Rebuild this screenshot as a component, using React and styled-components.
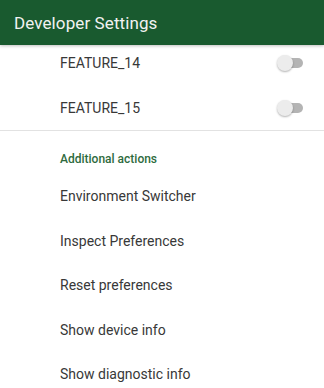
import React from "react";
import styled, { createGlobalStyle } from "styled-components";

const Global = createGlobalStyle`
  html, body { margin: 0; padding: 0; background: #fff; }
  body { font-family: Roboto, "Noto Sans", Arial, sans-serif; }
`;

const Screen = styled.div`
  width: 324px;
  height: 388px;
  overflow: hidden;
  display: flex;
  flex-direction: column;
  background: #fff;
`;

const AppBar = styled.header`
  position: relative;
  z-index: 1;
  flex: 0 0 45px;
  display: flex;
  align-items: center;
  padding: 0 14px;
  background: #195a2f;
  box-shadow: 0 1px 3px rgba(0, 0, 0, 0.25);
`;

const Title = styled.h1`
  margin: 0;
  font-size: 17px;
  font-weight: 400;
  color: #f2f2f2;
  letter-spacing: 0.1px;
`;

const Body = styled.div`
  flex: 1;
  overflow: hidden;
`;

const List = styled.div`
  margin-top: -5px;
  display: flex;
  flex-direction: column;
`;

const Row = styled.div`
  height: 45px;
  display: flex;
  align-items: center;
  justify-content: space-between;
  padding: 0 20px 0 60px;
  font-size: 14px;
  color: #383838;
`;

const Divider = styled.div`
  height: 1px;
  background: #e2e2e2;
`;

const Category = styled.div`
  height: 43px;
  display: flex;
  align-items: center;
  padding: 12px 0 0 60px;
  box-sizing: border-box;
  font-size: 12px;
  font-weight: 500;
  color: #2e6b3d;
`;

const Action = styled.div`
  height: 44.5px;
  display: flex;
  align-items: center;
  padding-left: 60px;
  font-size: 14px;
  color: #383838;
`;

const Switch = styled.div`
  position: relative;
  width: 27px;
  height: 16px;
  display: flex;
  align-items: center;
`;

const Track = styled.div`
  margin-left: 8px;
  width: 18px;
  height: 10px;
  border-radius: 5px;
  background: #b4b4b4;
`;

const Thumb = styled.div`
  position: absolute;
  left: 0;
  top: 0;
  width: 16px;
  height: 16px;
  border-radius: 50%;
  background: #ececec;
  box-shadow: 0 1px 2px rgba(0, 0, 0, 0.3);
`;

const features = ["FEATURE_14", "FEATURE_15"];
const actions = [
  "Environment Switcher",
  "Inspect Preferences",
  "Reset preferences",
  "Show device info",
  "Show diagnostic info",
];

export default function App() {
  return (
    <Screen>
      <Global />
      <AppBar>
        <Title>Developer Settings</Title>
      </AppBar>
      <Body>
        <List>
          {features.map((f) => (
            <Row key={f}>
              <span>{f}</span>
              <Switch>
                <Track />
                <Thumb />
              </Switch>
            </Row>
          ))}
          <Divider />
          <Category>Additional actions</Category>
          {actions.map((a) => (
            <Action key={a}>{a}</Action>
          ))}
        </List>
      </Body>
    </Screen>
  );
}
